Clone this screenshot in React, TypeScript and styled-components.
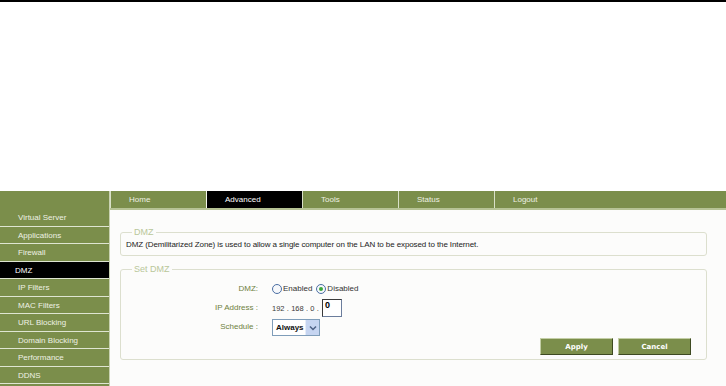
import styled, { createGlobalStyle } from 'styled-components';

const GREEN = '#7b8e4b';

const GlobalStyle = createGlobalStyle`
  html, body {
    margin: 0;
    padding: 0;
    background: #ffffff;
    font-family: 'Liberation Sans', Arial, sans-serif;
    font-size: 8px;
  }
`;

const sideItems = [
  'Virtual Server',
  'Applications',
  'Firewall',
  'DMZ',
  'IP Filters',
  'MAC Filters',
  'URL Blocking',
  'Domain Blocking',
  'Performance',
  'DDNS',
  '',
];

const navItems = ['Home', 'Advanced', 'Tools', 'Status', 'Logout'];

function Radio({ checked, label }: { checked?: boolean; label: string }) {
  return (
    <RadioLabel>
      <RadioCircle checked={checked} />
      {label}
    </RadioLabel>
  );
}

function App() {
  return (
    <>
      <GlobalStyle />
      <Page>
        <TopRule />
        <Blank />
        <Main>
          <Sidebar>
            <SideTop />
            {sideItems.map((item, i) => (
              <SideItem key={i} active={item === 'DMZ'}>
                {item}
              </SideItem>
            ))}
          </Sidebar>
          <Content>
            <Nav>
              {navItems.map((item) => (
                <NavItem key={item} active={item === 'Advanced'} last={item === 'Logout'}>
                  {item}
                </NavItem>
              ))}
            </Nav>
            <Body>
              <Fieldset>
                <Legend>DMZ</Legend>
                <Info>
                  DMZ (Demilitarized Zone) is used to allow a single computer on the LAN to be
                  exposed to the Internet.
                </Info>
              </Fieldset>
              <Fieldset gap>
                <Legend>Set DMZ</Legend>
                <FormGrid>
                  <FieldLabel>DMZ:</FieldLabel>
                  <FieldValue>
                    <Radio label="Enabled" />
                    <Radio checked label="Disabled" />
                  </FieldValue>
                  <FieldLabel>IP Address :</FieldLabel>
                  <FieldValue>
                    <IpPrefix>192 . 168 . 0 .</IpPrefix>
                    <IpInput>0</IpInput>
                  </FieldValue>
                  <FieldLabel>Schedule :</FieldLabel>
                  <FieldValue>
                    <Select>
                      <SelectText>Always</SelectText>
                      <SelectArrow>
                        <svg width="8" height="6" viewBox="0 0 8 6">
                          <path d="M1 1.5 L4 4.5 L7 1.5" fill="none" stroke="#4d6185" strokeWidth="1.5" />
                        </svg>
                      </SelectArrow>
                    </Select>
                  </FieldValue>
                </FormGrid>
                <Buttons>
                  <Button>Apply</Button>
                  <Button>Cancel</Button>
                </Buttons>
              </Fieldset>
            </Body>
          </Content>
        </Main>
      </Page>
    </>
  );
}

export default App;

const Page = styled.div`
  width: 726px;
  height: 386px;
  overflow: hidden;
  display: flex;
  flex-direction: column;
`;

const TopRule = styled.div`
  flex-shrink: 0;
  height: 2px;
  background: #000;
`;

const Blank = styled.div`
  flex-shrink: 0;
  height: 189px;
`;

const Main = styled.div`
  display: flex;
  flex: 1;
  min-height: 0;
`;

const Sidebar = styled.div`
  width: 109px;
  background: ${GREEN};
  border-right: 1px solid #c9d2b2;
`;

const SideTop = styled.div`
  height: 18px;
`;

const SideItem = styled.div<{ active?: boolean }>`
  box-sizing: border-box;
  height: 17.5px;
  line-height: 17px;
  padding-left: ${(p) => (p.active ? '15px' : '18px')};
  border-bottom: 1px solid #dfe5d2;
  background: ${(p) => (p.active ? '#000' : 'transparent')};
  color: ${(p) => (p.active ? '#ffffff' : '#eef1e4')};
  white-space: nowrap;
`;

const Content = styled.div`
  flex: 1;
  background: #fcfcfb;
  display: flex;
  flex-direction: column;
`;

const Nav = styled.div`
  display: flex;
  flex-shrink: 0;
  height: 17px;
  background: ${GREEN};
  border-bottom: 2px solid #b6c395;
`;

const NavItem = styled.div<{ active?: boolean; last?: boolean }>`
  box-sizing: border-box;
  width: ${(p) => (p.last ? 'auto' : '96px')};
  flex: ${(p) => (p.last ? '1' : 'none')};
  padding-left: 18px;
  line-height: 17px;
  border-left: ${(p) => (p.active ? '1px solid #f4f6ee' : '1px solid #d9e0c8')};
  background: ${(p) => (p.active ? '#000' : 'transparent')};
  color: ${(p) => (p.active ? '#ffffff' : '#eef1e4')};
`;

const Body = styled.div`
  padding: 16px 19px 0 10px;
  display: flex;
  flex-direction: column;
`;

const Fieldset = styled.fieldset<{ gap?: boolean }>`
  margin: ${(p) => (p.gap ? '7px 0 0' : '0')};
  padding: 0 5px 4px;
  border: 1px solid #dcdfce;
  border-radius: 3px;
  min-width: 0;
`;

const Legend = styled.legend`
  padding: 0 2px;
  margin-left: 6px;
  line-height: 12px;
  font-size: 9px;
  color: #b9c79a;
`;

const Info = styled.div`
  color: #222;
  line-height: 12px;
  padding-top: 1px;
  letter-spacing: -0.1px;
`;

const FormGrid = styled.div`
  display: grid;
  grid-template-columns: 132px auto;
  column-gap: 14px;
  row-gap: 2px;
  align-items: center;
  margin-top: 5px;
`;

const FieldLabel = styled.div`
  text-align: right;
  color: #6f8140;
  line-height: 17px;
`;

const FieldValue = styled.div`
  display: flex;
  align-items: center;
  gap: 3px;
  height: 17px;
  color: #333;
`;

const RadioLabel = styled.label`
  display: inline-flex;
  align-items: center;
  gap: 1px;
  color: #333;
  margin-right: 1px;
`;

const RadioCircle = styled.span<{ checked?: boolean }>`
  box-sizing: border-box;
  width: 10px;
  height: 10px;
  border-radius: 50%;
  border: 1px solid #4b6ea3;
  background: #f6f8fb;
  display: inline-flex;
  align-items: center;
  justify-content: center;
  &::after {
    content: '';
    width: 4px;
    height: 4px;
    border-radius: 50%;
    background: ${(p) => (p.checked ? '#3aa83a' : 'transparent')};
  }
`;

const IpPrefix = styled.span`
  font-size: 7.5px;
  word-spacing: 0.2px;
  color: #3a3a3a;
  padding-top: 2px;
  white-space: pre;
`;

const IpInput = styled.div`
  box-sizing: border-box;
  width: 20px;
  height: 18px;
  margin-top: 1px;
  border: 1px solid #6b7d9c;
  border-top-color: #3a3a3a;
  border-left-color: #3a3a3a;
  background: #fff;
  font-weight: bold;
  font-size: 9px;
  padding: 0 2px;
  line-height: 11px;
  color: #000;
`;

const Select = styled.div`
  box-sizing: border-box;
  width: 48px;
  height: 17px;
  margin-top: 2px;
  border: 1px solid #7f9db9;
  background: #fff;
  display: flex;
  align-items: stretch;
`;

const SelectText = styled.span`
  flex: 1;
  font-weight: bold;
  color: #111;
  padding-left: 3px;
  line-height: 15px;
`;

const SelectArrow = styled.span`
  width: 13px;
  background: #c6d5f1;
  border-left: 1px solid #e6edf9;
  display: flex;
  align-items: center;
  justify-content: center;
`;

const Buttons = styled.div`
  display: flex;
  justify-content: flex-end;
  gap: 5px;
  margin: 3px 10px 0 0;
`;

const Button = styled.button`
  box-sizing: border-box;
  width: 73px;
  height: 17px;
  padding: 0;
  background: ${GREEN};
  border: 1px solid;
  border-color: #c3cea6 #3e4a22 #3e4a22 #c3cea6;
  color: #fff;
  font-family: 'DejaVu Sans', sans-serif;
  font-weight: bold;
  font-size: 7px;
`;
